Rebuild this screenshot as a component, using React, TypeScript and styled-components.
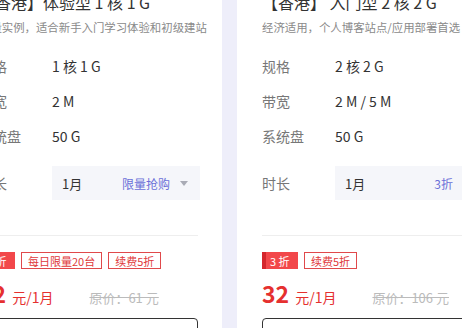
import styled, { createGlobalStyle } from "styled-components";

const Global = createGlobalStyle`
  html, body {
    margin: 0;
    padding: 0;
    background: #eeeefa;
    overflow: hidden;
  }
  body {
    font-family: "Noto Sans CJK SC", "Noto Sans", sans-serif;
    color: #333;
  }
`;

const Page = styled.div`
  display: flex;
  gap: 15px;
  margin: -9px 0 0 -46px;
  width: 560px;
`;

const Card = styled.div`
  flex: 0 0 268px;
  min-width: 0;
  overflow: hidden;
  box-sizing: border-box;
  background: #fff;
  padding: 0 24px 20px 25px;
  height: 400px;
`;

const Title = styled.div`
  font-size: 16px;
  line-height: 22px;
  white-space: nowrap;
  color: #333;
`;

const Desc = styled.div`
  margin-top: 5px;
  font-size: 11.4px;
  line-height: 18px;
  color: #8a8a8a;
  white-space: nowrap;
`;

const Specs = styled.div`
  margin-top: 20px;
  display: flex;
  flex-direction: column;
  gap: 15px;
`;

const Row = styled.div<{ $tall?: boolean }>`
  display: flex;
  align-items: center;
  height: ${(p) => (p.$tall ? "34px" : "20px")};
  margin-top: ${(p) => (p.$tall ? "5px" : "0")};
  white-space: nowrap;
`;

const Label = styled.span`
  flex: 0 0 73px;
  font-size: 14px;
  color: #777;
`;

const Value = styled.span`
  font-size: 14px;
  color: #333;
`;

const Select = styled.div`
  flex: 0 0 148px;
  height: 34px;
  box-sizing: border-box;
  background: #f5f6fa;
  display: flex;
  align-items: center;
  padding: 0 12px 0 10px;
  font-size: 13px;
  color: #333;
`;

const Promo = styled.span`
  margin-left: auto;
  font-size: 12px;
  color: #6a6fd8;
`;

const Arrow = styled.svg`
  margin-left: 10px;
  flex: none;
`;

const Divider = styled.div`
  margin-top: 35px;
  height: 1px;
  background: #eee;
`;

const Tags = styled.div`
  margin-top: 16px;
  display: flex;
  gap: 6px;
`;

const Tag = styled.span<{ $solid?: boolean }>`
  display: inline-flex;
  align-items: center;
  box-sizing: border-box;
  height: 17px;
  padding: 0 6px;
  font-size: 11px;
  white-space: nowrap;
  border: 1px solid #e0494b;
  color: ${(p) => (p.$solid ? "#fff" : "#e0393b")};
  background: ${(p) =>
    p.$solid
      ? "linear-gradient(90deg, #d4262c 0 4px, #f2474a 4px)"
      : "#fff"};
  ${(p) => p.$solid && "padding: 0 8px; width: 36px; border: none;"}
`;

const PriceRow = styled.div`
  margin-top: 10px;
  height: 28px;
  display: flex;
  align-items: baseline;
  white-space: nowrap;
  line-height: 28px;
`;

const Amount = styled.span`
  font-size: 23px;
  font-weight: 700;
  color: #e5302f;
`;

const Unit = styled.span`
  margin-left: 6px;
  font-size: 14px;
  color: #e5302f;
`;

const Original = styled.span`
  margin-left: 36px;
  font-size: 13px;
  color: #bbb;
  text-decoration: line-through;
`;

const BuyButton = styled.button`
  margin-top: 11px;
  width: 100%;
  height: 36px;
  border: 1px solid #333;
  border-radius: 4px;
  background: #fff;
  font-family: inherit;
  font-size: 14px;
  color: #333;
`;

interface Plan {
  title: string;
  desc: string;
  spec: string;
  bandwidth: string;
  disk: string;
  promo: string;
  tags: { text: string; solid?: boolean }[];
  price: string;
  original: string;
}

const plans: Plan[] = [
  {
    title: "【香港】体验型 1 核 1 G",
    desc: "轻量实例，适合新手入门学习体验和初级建站",
    spec: "1 核 1 G",
    bandwidth: "2 M",
    disk: "50 G",
    promo: "限量抢购",
    tags: [
      { text: "2 折", solid: true },
      { text: "每日限量20台" },
      { text: "续费5折" },
    ],
    price: "12",
    original: "原价：61 元",
  },
  {
    title: "【香港】 入门型 2 核 2 G",
    desc: "经济适用，个人博客站点/应用部署首选",
    spec: "2 核 2 G",
    bandwidth: "2 M / 5 M",
    disk: "50 G",
    promo: "3折",
    tags: [{ text: "3 折", solid: true }, { text: "续费5折" }],
    price: "32",
    original: "原价：106 元",
  },
];

const PlanCard = ({ plan }: { plan: Plan }) => (
  <Card>
    <Title>{plan.title}</Title>
    <Desc>{plan.desc}</Desc>
    <Specs>
      <Row>
        <Label>规格</Label>
        <Value>{plan.spec}</Value>
      </Row>
      <Row>
        <Label>带宽</Label>
        <Value>{plan.bandwidth}</Value>
      </Row>
      <Row>
        <Label>系统盘</Label>
        <Value>{plan.disk}</Value>
      </Row>
      <Row $tall>
        <Label>时长</Label>
        <Select>
          <span>1月</span>
          <Promo>{plan.promo}</Promo>
          <Arrow width="8" height="5" viewBox="0 0 8 5">
            <polygon points="0,0 8,0 4,5" fill="#a9abb5" />
          </Arrow>
        </Select>
      </Row>
    </Specs>
    <Divider />
    <Tags>
      {plan.tags.map((t) => (
        <Tag key={t.text} $solid={t.solid}>
          {t.text}
        </Tag>
      ))}
    </Tags>
    <PriceRow>
      <Amount>{plan.price}</Amount>
      <Unit>元/1月</Unit>
      <Original>{plan.original}</Original>
    </PriceRow>
    <BuyButton>立即购买</BuyButton>
  </Card>
);

export default function App() {
  return (
    <>
      <Global />
      <Page>
        {plans.map((p) => (
          <PlanCard key={p.title} plan={p} />
        ))}
      </Page>
    </>
  );
}
